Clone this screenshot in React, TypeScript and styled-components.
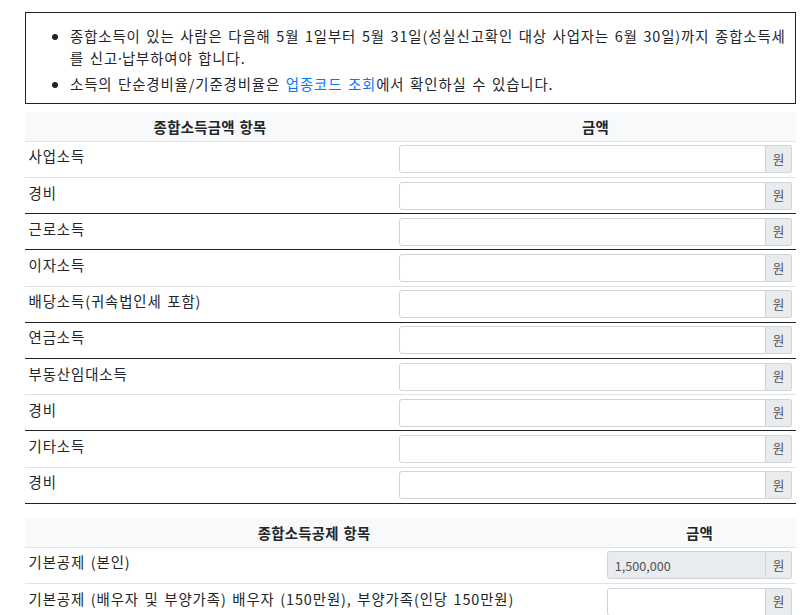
import styled, { createGlobalStyle } from "styled-components";

const GlobalStyle = createGlobalStyle`
  body {
    margin: 0;
    background: #fff;
    color: #212529;
    font-family: "Noto Sans CJK KR", "Noto Sans", sans-serif;
    font-size: 14.4px;
    line-height: 1.5;
    letter-spacing: 0.9px;
    word-spacing: 1.5px;
  }
  * {
    box-sizing: border-box;
  }
`;

const Page = styled.div`
  width: 771px;
  margin-left: 25px;
  padding-top: 12px;
`;

const Notice = styled.div`
  border: 1px solid #222;
  padding: 12px 8px 5px;
  margin-bottom: 8px;
`;

const NoticeList = styled.ul`
  margin: 0;
  padding-left: 36px;
`;

const NoticeItem = styled.li`
  margin-bottom: 3.6px;
`;

// the Korean font draws a full-width middle dot; the original is narrow
const MiddleDot = styled.span`
  font-family: "Noto Sans", sans-serif;
  letter-spacing: 0;
`;

const Link = styled.a`
  color: #007bff;
  text-decoration: none;
`;

const Table = styled.table`
  width: 100%;
  border-collapse: collapse;
  table-layout: fixed;
  margin-bottom: 14.4px;
`;

const HeadCell = styled.th<{ $width: string }>`
  width: ${(p) => p.$width};
  background: #f8f9fa;
  padding: 3.6px;
  font-weight: 700;
  letter-spacing: 0.3px;
  word-spacing: 1px;
  text-align: center;
  border-bottom: 1px solid #dee2e6;
`;

const Row = styled.tr<{ $strong?: boolean }>`
  border-top: 1px solid ${(p) => (p.$strong ? "#222" : "#dee2e6")};
`;

const BodyTable = styled.tbody<{ $closed?: boolean }>`
  border-bottom: ${(p) => (p.$closed ? "1px solid #222" : "0")};
`;

const LabelCell = styled.td`
  padding: 3.6px;
  vertical-align: top;
`;

const AmountCell = styled.td`
  padding: 3.6px;
  vertical-align: top;
`;

const InputGroup = styled.div`
  display: flex;
  height: 28px;
`;

const AmountInput = styled.input`
  flex: 1;
  min-width: 0;
  height: 28px;
  border: 1px solid #ced4da;
  border-radius: 3px 0 0 3px;
  padding: 0 7px;
  font-family: inherit;
  font-size: 12.6px;
  letter-spacing: 0;
  color: #495057;
  background: #fff;
  outline: none;

  &:read-only {
    background: #e9ecef;
  }
`;

const Addon = styled.span`
  display: flex;
  align-items: center;
  padding: 0 7px;
  border: 1px solid #ced4da;
  border-left: 0;
  border-radius: 0 3px 3px 0;
  background: #e9ecef;
  font-size: 12.6px;
  letter-spacing: 0;
  color: #495057;
`;

interface Item {
  label: string;
  strong?: boolean;
  value?: string;
}

const incomeItems: Item[] = [
  { label: "사업소득" },
  { label: "경비" },
  { label: "근로소득", strong: true },
  { label: "이자소득", strong: true },
  { label: "배당소득(귀속법인세 포함)" },
  { label: "연금소득", strong: true },
  { label: "부동산임대소득", strong: true },
  { label: "경비" },
  { label: "기타소득", strong: true },
  { label: "경비" },
];

const deductionItems: Item[] = [
  { label: "기본공제 (본인)", value: "1,500,000" },
  { label: "기본공제 (배우자 및 부양가족) 배우자 (150만원), 부양가족(인당 150만원)" },
];

const Amount = ({ value }: { value?: string }) => (
  <InputGroup>
    <AmountInput
      type="text"
      defaultValue={value}
      readOnly={value !== undefined}
    />
    <Addon>원</Addon>
  </InputGroup>
);

const App = () => {
  return (
    <>
      <GlobalStyle />
      <Page>
        <Notice>
          <NoticeList>
            <NoticeItem>
              종합소득이 있는 사람은 다음해 5월 1일부터 5월 31일(성실신고확인
              대상 사업자는 6월 30일)까지 종합소득세를 신고<MiddleDot>·</MiddleDot>
              납부하여야 합니다.
            </NoticeItem>
            <NoticeItem>
              소득의 단순경비율/기준경비율은 <Link href="#">업종코드 조회</Link>
              에서 확인하실 수 있습니다.
            </NoticeItem>
          </NoticeList>
        </Notice>

        <Table>
          <thead>
            <tr>
              <HeadCell $width="48%">종합소득금액 항목</HeadCell>
              <HeadCell $width="52%">금액</HeadCell>
            </tr>
          </thead>
          <BodyTable $closed>
            {incomeItems.map((item, i) => (
              <Row key={i} $strong={item.strong}>
                <LabelCell>{item.label}</LabelCell>
                <AmountCell>
                  <Amount value={item.value} />
                </AmountCell>
              </Row>
            ))}
          </BodyTable>
        </Table>

        <Table>
          <thead>
            <tr>
              <HeadCell $width="75%">종합소득공제 항목</HeadCell>
              <HeadCell $width="25%">금액</HeadCell>
            </tr>
          </thead>
          <BodyTable>
            {deductionItems.map((item, i) => (
              <Row key={i} $strong={item.strong}>
                <LabelCell>{item.label}</LabelCell>
                <AmountCell>
                  <Amount value={item.value} />
                </AmountCell>
              </Row>
            ))}
          </BodyTable>
        </Table>
      </Page>
    </>
  );
};

export default App;
